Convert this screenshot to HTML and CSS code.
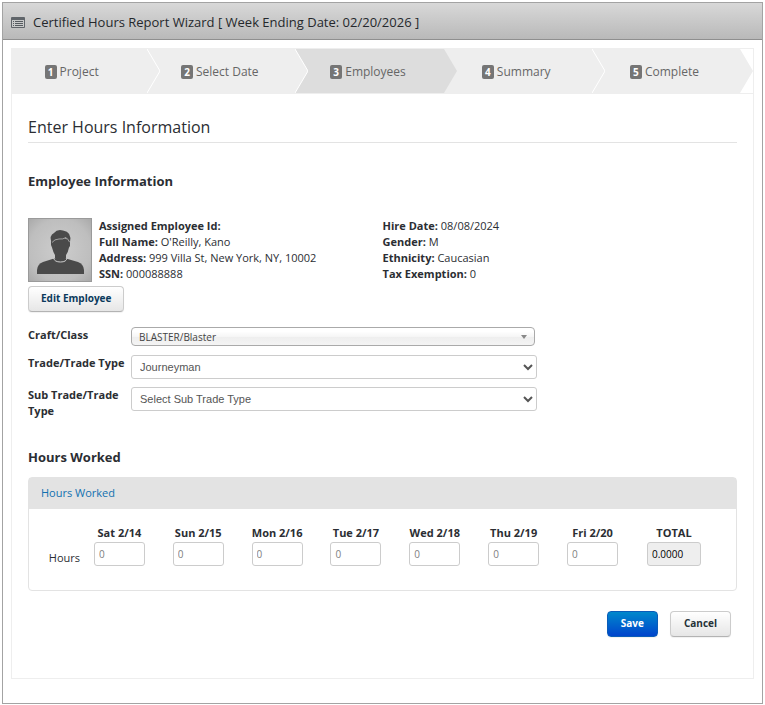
FILE: index.html
```html
<!DOCTYPE html>
<html lang="en">
<head>
<meta charset="utf-8">
<title>Certified Hours Report Wizard</title>
<link rel="stylesheet" href="styles.css">
</head>
<body>
<div class="window">
  <header class="titlebar">
    <svg class="titlebar-icon" width="14" height="11" viewBox="0 0 14 11" aria-hidden="true">
      <rect width="14" height="11" rx="1" fill="#60656a"/>
      <rect x="1" y="3" width="12" height="7" fill="#c9caca"/>
      <path d="M2 4.5h1M2 6.5h1M2 8.5h1M4 4.5h8M4 6.5h8M4 8.5h8" stroke="#565b60"/>
    </svg>
    <span>Certified Hours Report Wizard [ Week Ending Date: 02/20/2026 ]</span>
  </header>

  <main class="wizard">
    <ol class="steps">
      <li class="step">
        <span class="step-label"><span class="badge">1</span>Project</span>
        <svg class="chevron" width="13" height="44" viewBox="0 0 13 44" aria-hidden="true"><path d="M0 0L13 22L0 44" fill="none" stroke="#fff"/></svg>
      </li>
      <li class="step">
        <span class="step-label"><span class="badge">2</span>Select Date</span>
        <svg class="chevron" width="13" height="44" viewBox="0 0 13 44" aria-hidden="true"><path d="M0 0H13V44H0L13 22Z" fill="#ddd"/><path d="M0 0L13 22L0 44" fill="none" stroke="#fff"/></svg>
      </li>
      <li class="step step-active" aria-current="step">
        <span class="step-label"><span class="badge">3</span>Employees</span>
        <svg class="chevron" width="13" height="44" viewBox="0 0 13 44" aria-hidden="true"><path d="M0 0H13V44H0L13 22Z" fill="#eee"/></svg>
      </li>
      <li class="step">
        <span class="step-label"><span class="badge">4</span>Summary</span>
        <svg class="chevron" width="13" height="44" viewBox="0 0 13 44" aria-hidden="true"><path d="M0 0L13 22L0 44" fill="none" stroke="#fff"/></svg>
      </li>
      <li class="step">
        <span class="step-label"><span class="badge">5</span>Complete</span>
        <svg class="chevron" width="13" height="44" viewBox="0 0 13 44" aria-hidden="true"><path d="M0 0H13V44H0L13 22Z" fill="#fff"/></svg>
      </li>
    </ol>

    <form class="content">
      <h1>Enter Hours Information</h1>

      <h2>Employee Information</h2>
      <div class="employee">
        <svg class="photo" width="64" height="64" viewBox="0 0 64 64" role="img" aria-label="Employee photo">
          <defs>
            <radialGradient id="photo-bg" cx="50%" cy="50%" r="70%">
              <stop offset="0" stop-color="#cdcdcd"/>
              <stop offset="0.7" stop-color="#bebebe"/>
              <stop offset="1" stop-color="#a9a9a9"/>
            </radialGradient>
          </defs>
          <rect x="0.5" y="0.5" width="63" height="63" fill="url(#photo-bg)" stroke="#9a9a9a"/>
          <path d="M9 56V52Q9.500 46 15 44L26 40.500H38L50 44Q55.500 46 56 52V56Z" fill="#4a4a4a"/>
          <path d="M27 32H38V40Q37 43 32.500 43Q28 43 27 40Z" fill="#4a4a4a"/>
          <path d="M25.500 40Q26.500 44 32.500 44Q38.500 44 39 40" fill="none" stroke="#cfcfcf"/>
          <path d="M24 22Q32 18 41 22L42 25Q42.500 28 41 29.500Q40 35 37.500 38H27.500Q25 34 24 29.500Q22.500 28 23 24Z" fill="#4a4a4a"/>
          <path d="M23.500 25Q21 17 26 15Q29 11 35 12.500Q44 14 42 24L41 25Q40.500 22 38 20Q35 22 31 21Q26 21 23.500 25Z" fill="#4a4a4a"/>
          <path d="M24 24.500Q26.500 21 31 21Q35 21.500 38 19.500Q40 21 41.500 24" fill="none" stroke="#b8b8b8" stroke-width="0.8"/>
        </svg>
        <div class="details">
          <div><b>Assigned Employee Id:</b></div>
          <div><b>Full Name:</b> O'Reilly, Kano</div>
          <div><b>Address:</b> 999 Villa St, New York, NY, 10002</div>
          <div><b>SSN:</b> 000088888</div>
        </div>
        <div class="details">
          <div><b>Hire Date:</b> 08/08/2024</div>
          <div><b>Gender:</b> M</div>
          <div><b>Ethnicity:</b> Caucasian</div>
          <div><b>Tax Exemption:</b> 0</div>
        </div>
      </div>
      <button type="button" class="btn btn-edit">Edit Employee</button>

      <div class="fields">
        <label for="craft">Craft/Class</label>
        <div class="combo">
          <select id="craft"><option>BLASTER/Blaster</option></select>
          <span class="combo-arrow"></span>
        </div>
        <label for="trade">Trade/Trade Type</label>
        <select id="trade" class="select"><option>Journeyman</option></select>
        <label for="subtrade">Sub Trade/Trade Type</label>
        <select id="subtrade" class="select"><option>Select Sub Trade Type</option></select>
      </div>

      <h2>Hours Worked</h2>
      <section class="card">
        <div class="card-head"><a href="#hours">Hours Worked</a></div>
        <div class="card-body" id="hours">
          <table class="hours">
            <colgroup><col class="col-name"><col span="7"><col class="col-total"></colgroup>
            <thead>
              <tr><td></td><th scope="col">Sat 2/14</th><th scope="col">Sun 2/15</th><th scope="col">Mon 2/16</th><th scope="col">Tue 2/17</th><th scope="col">Wed 2/18</th><th scope="col">Thu 2/19</th><th scope="col">Fri 2/20</th><th scope="col">TOTAL</th></tr>
            </thead>
            <tbody>
              <tr>
                <th scope="row" class="row-name">Hours</th>
                <td><input type="text" placeholder="0" aria-label="Sat 2/14"></td>
                <td><input type="text" placeholder="0" aria-label="Sun 2/15"></td>
                <td><input type="text" placeholder="0" aria-label="Mon 2/16"></td>
                <td><input type="text" placeholder="0" aria-label="Tue 2/17"></td>
                <td><input type="text" placeholder="0" aria-label="Wed 2/18"></td>
                <td><input type="text" placeholder="0" aria-label="Thu 2/19"></td>
                <td><input type="text" placeholder="0" aria-label="Fri 2/20"></td>
                <td><input type="text" class="total" value="0.0000" readonly aria-label="Total"></td>
              </tr>
            </tbody>
          </table>
        </div>
      </section>

      <div class="actions">
        <button type="submit" class="btn btn-primary">Save</button>
        <button type="button" class="btn">Cancel</button>
      </div>
    </form>
  </main>
</div>
</body>
</html>
```
FILE: styles.css
```css
* { box-sizing: border-box; }

body {
  margin: 2px;
  background: #fff;
  color: #2b2e33;
  font: 11px/16px "Open Sans", sans-serif;
}

.window {
  border: 1px solid #a3a3a3;
  padding-bottom: 24px;
}

.titlebar {
  display: flex;
  align-items: center;
  gap: 8px;
  height: 37px;
  padding: 2px 8px 0;
  border-bottom: 1px solid #8f8f8f;
  background: linear-gradient(#d8d8d8, #b9b9b9);
  font-size: 13px;
  color: #25282c;
}

.wizard {
  margin: 8px 8px 0;
  border: 1px solid #eee;
}

.steps {
  display: flex;
  margin: 0;
  padding: 0;
  list-style: none;
  background: #eee;
  border-bottom: 1px solid #eee;
}

.step {
  display: flex;
  flex: 1;
  height: 44px;
}

.step-label {
  display: flex;
  flex: 1;
  align-items: center;
  justify-content: center;
  gap: 3px;
  padding: 1px 16px 0 0;
  font-size: 12px;
  color: #666;
}

.step-active .step-label { background: #ddd; }
.step-active .chevron { background: #ddd; }
.chevron { display: block; flex: none; }

.badge {
  width: 12px;
  height: 14px;
  border-radius: 2px;
  background: #757575;
  color: #fff;
  font-size: 10px;
  font-weight: 700;
  line-height: 14px;
  text-align: center;
}

.content { padding: 23px 16px 40px; }

h1 {
  margin: 0 0 28px;
  padding-bottom: 5px;
  border-bottom: 1px solid #e3e3e3;
  font-size: 16px;
  font-weight: 400;
  line-height: 20px;
}

h2 {
  margin: 0 0 27px;
  font-size: 13px;
  line-height: 20px;
}

.employee { display: flex; }
.photo { display: block; flex: none; margin-right: 7px; }
.details:nth-child(2) { flex: 0 0 40%; }

.btn {
  height: 26px;
  padding: 0 13px 2px;
  border: 1px solid #ccc;
  border-bottom-color: #b3b3b3;
  border-radius: 4px;
  background: linear-gradient(#fff, #e6e6e6);
  box-shadow: 0 1px 1px rgba(0, 0, 0, 0.06);
  color: #263238;
  font: 700 10px/16px "Open Sans", sans-serif;
}

.btn-edit { display: block; margin-top: 4px; padding: 0 12px 2px; color: #0a3a5c; }

.btn-primary {
  border-color: #0a5cb8;
  background: linear-gradient(#0088cc, #0044cc);
  color: #fff;
}

.fields {
  display: grid;
  grid-template-columns: 98px minmax(0, 406px);
  gap: 8px 5px;
  margin: 15px 0 28px;
}

.fields label { font-weight: 700; }

.combo { position: relative; height: 20px; margin-right: 2px; }

.combo select {
  appearance: none;
  display: block;
  width: 100%;
  height: 19px;
  padding: 0 7px;
  border: 1px solid #aaa;
  border-radius: 4px;
  background: linear-gradient(#fff 20%, #f6f6f6 50%, #eee 52%, #f4f4f4);
  color: #444;
  font: 10px/16px "Open Sans", sans-serif;
}

.combo-arrow {
  position: absolute;
  top: 8px;
  right: 8px;
  border: 3px solid transparent;
  border-top: 4px solid #888;
  border-bottom: 0;
  pointer-events: none;
}

.select {
  width: 100%;
  height: 24px;
  padding: 0 4px;
  border: 1px solid #ccc;
  border-radius: 3px;
  background: #fff;
  color: #555;
  font: 11px/16px "Liberation Sans", sans-serif;
}

.fields + h2 { margin-bottom: 10px; }

.card {
  border: 1px solid #e3e3e3;
  border-radius: 4px;
}

.card-head {
  padding: 7px 12px 8px;
  background: #e3e3e3;
}

.card-head a { color: #1271b0; text-decoration: none; }
.card-body { padding: 16px 20px 24px 12px; }

.hours {
  width: 100%;
  table-layout: fixed;
  border-collapse: collapse;
}

.hours .col-name { width: 39px; }
.hours .col-total { width: 84px; }
.hours th, .hours td { padding: 0; text-align: center; }
.hours tbody td { padding-top: 1px; }
.hours .row-name { padding-top: 8px; font-weight: 400; text-align: right; }

.hours input {
  display: block;
  width: 51px;
  height: 24px;
  margin: 0 auto;
  padding: 0 4px;
  border: 1px solid #ccc;
  border-radius: 3px;
  background: #fff;
  color: #000;
  font: 10px/16px "Open Sans", sans-serif;
}

.hours input::placeholder { color: #808080; }
.hours .total { width: 54px; background: #eee; }

.actions {
  display: flex;
  justify-content: flex-end;
  gap: 12px;
  margin-top: 20px;
  padding: 0 6px 1px 0;
}
```
